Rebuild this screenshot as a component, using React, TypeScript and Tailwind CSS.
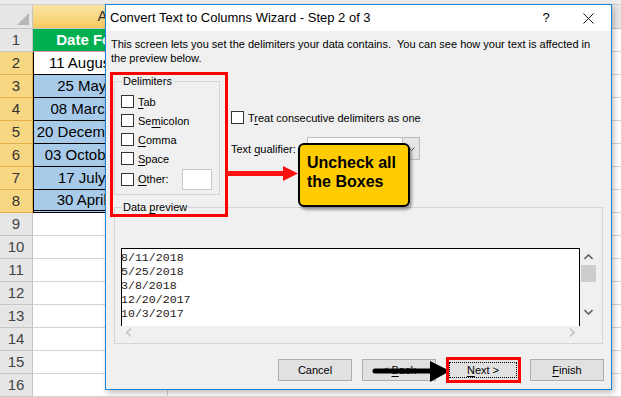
import React from 'react';

const rows = [
  { n: 1, text: 'Date Format', kind: 'head' },
  { n: 2, text: '11 August 2018', kind: 'white' },
  { n: 3, text: '25 May 2018', kind: 'blue' },
  { n: 4, text: '08 March 2018', kind: 'blue' },
  { n: 5, text: '20 December 2017', kind: 'blue' },
  { n: 6, text: '03 October 2017', kind: 'blue' },
  { n: 7, text: '17 July 2017', kind: 'blue' },
  { n: 8, text: '30 April 2017', kind: 'last' },
  { n: 9, text: '', kind: 'empty' },
  { n: 10, text: '', kind: 'empty' },
  { n: 11, text: '', kind: 'empty' },
  { n: 12, text: '', kind: 'empty' },
  { n: 13, text: '', kind: 'empty' },
  { n: 14, text: '', kind: 'empty' },
  { n: 15, text: '', kind: 'empty' },
  { n: 16, text: '', kind: 'empty' },
];

const preview = ['8/11/2018', '5/25/2018', '3/8/2018', '12/20/2017', '10/3/2017'];

const Box = () => <span className="w-[13px] h-[13px] border border-[#333] bg-white shrink-0" />;

const Check = ({ pre, u, post }: { pre?: string; u: string; post: string }) => (
  <div className="flex items-center h-[19px]">
    <Box />
    <span className="ml-[4px]">
      {pre}
      <span className="underline underline-offset-2">{u}</span>
      {post}
    </span>
  </div>
);

const Button = ({ children, focus }: { children: React.ReactNode; focus?: boolean }) => (
  <div className="w-[74px] h-[22px] border border-[#adadad] bg-[#e1e1e1] flex items-center justify-center p-[2px]">
    <div className={`w-full h-full flex items-center justify-center ${focus ? 'border border-dotted border-black' : ''}`}>
      {children}
    </div>
  </div>
);

const Sheet = () => (
  <div className="flex flex-col">
    <div className="h-[5px] bg-[#ececec] border-b border-[#d0d0d0]" />
    <div className="flex h-[24px] border-b border-[#c6c6c6]">
      <div className="w-[33px] bg-[#e6e6e6] border-r border-[#c6c6c6] relative">
        <div className="absolute right-[3px] bottom-[3px] w-0 h-0 border-l-[12px] border-l-transparent border-b-[12px] border-b-[#b7b7b7]" />
      </div>
      <div className="w-[134px] bg-gradient-to-b from-[#fbe5a3] to-[#f6ca5f] border-r border-[#e0a830] flex items-center justify-center pl-[6px] text-[15px] text-[#333]">
        A
      </div>
      <div className="flex-1 bg-[#e6e6e6]" />
    </div>
    {rows.map((r) => {
      const sel = r.n >= 2 && r.n <= 8;
      let cell = 'bg-white border-b border-[#d4d4d4]';
      if (r.kind === 'head') cell = 'bg-[#00b050] text-white font-bold border-b border-[#e090a0]';
      if (r.kind === 'white') cell = 'bg-white border-b border-black border-l border-l-black';
      if (r.kind === 'blue') cell = 'bg-[#a9cbea] border-b border-black border-l border-l-black';
      if (r.kind === 'last') cell = 'bg-[#a9cbea] border-b-[3px] border-double border-black border-l border-l-black';
      return (
        <div key={r.n} className="flex h-[23px]">
          <div
            className={`w-[33px] shrink-0 flex items-center justify-center text-[15px] border-r border-b ${
              sel ? 'bg-[#f8d783] border-[#e2b04a] text-[#333]' : 'bg-[#e6e6e6] border-[#c6c6c6] text-[#444]'
            }`}
          >
            {r.n}
          </div>
          <div className={`w-[134px] shrink-0 flex items-center justify-center text-[15px] whitespace-nowrap overflow-hidden ${cell}`}>
            {r.text}
          </div>
          <div className="flex-1 border-b border-l border-[#d4d4d4]" />
        </div>
      );
    })}
  </div>
);

const Dialog = () => (
  <div className="absolute left-[105px] top-[4px] w-[507px] h-[386px] border border-[#1a83d6] bg-[#f0f0f0] flex flex-col shadow-[2px_3px_6px_rgba(0,0,0,0.25)] text-[11px] leading-[14px] text-black">
    <div className="h-[26px] bg-white flex items-center pl-[4px] text-[13px]">
      <span className="flex-1">Convert Text to Columns Wizard - Step 2 of 3</span>
      <span className="w-[20px] text-center mr-[27px] text-[13px]">?</span>
      <svg width="11" height="11" viewBox="0 0 11 11" className="mr-[17px]">
        <path d="M0.5 0.5 L10.5 10.5 M10.5 0.5 L0.5 10.5" stroke="#111" strokeWidth="1" />
      </svg>
    </div>
    <div className="flex-1 px-[5px] pt-[6px] pb-[8px] flex flex-col">
      <p>
        This screen lets you set the delimiters your data contains.&nbsp; You can see how your text is affected in
        <br />
        the preview below.
      </p>
      <div className="flex mt-[9px]">
        <fieldset className="ml-[3px] w-[106px] h-[121px] border border-[#d5d5d5] px-[6px] pb-[4px]">
          <legend className="ml-[1px] px-[1px]">Delimiters</legend>
          <div className="pt-[4px] flex flex-col">
            <Check u="T" post="ab" />
            <Check pre="Se" u="m" post="icolon" />
            <Check u="C" post="omma" />
            <Check u="S" post="pace" />
            <div className="flex items-center h-[22px]">
              <Box />
              <span className="ml-[4px]">
                <span className="underline underline-offset-2">O</span>ther:
              </span>
              <span className="ml-[13px] w-[30px] h-[21px] bg-white border border-[#c8c8c8]" />
            </div>
          </div>
        </fieldset>
        <div className="ml-[11px] flex flex-col">
          <div className="mt-[34px]">
            <Check pre="T" u="r" post="eat consecutive delimiters as one" />
          </div>
          <div className="mt-[10px] flex items-center">
            <span className="w-[76px]">
              Text <span className="underline underline-offset-2">q</span>ualifier:
            </span>
            <div className="w-[113px] h-[23px] bg-white border border-[#bcbcbc] flex justify-end">
              <div className="w-[17px] h-full bg-[#e5e5e5] border-l border-[#bcbcbc] flex items-center justify-center">
                <svg width="7" height="4" viewBox="0 0 7 4">
                  <path d="M0.5 0.5 L3.5 3.5 L6.5 0.5" stroke="#555" fill="none" />
                </svg>
              </div>
            </div>
          </div>
        </div>
      </div>
      <fieldset className="mt-[5px] ml-[3px] w-[489px] h-[144px] border border-[#d5d5d5] px-[6px]">
        <legend className="ml-[1px] px-[1px]">
          Data <span className="underline underline-offset-2">p</span>review
        </legend>
        <div className="mt-[34px] flex w-[475px]">
          <div className="flex flex-col w-[459px]">
            <div className="h-[78px] bg-white border-t border-l border-r border-black font-['Liberation_Mono',monospace] text-[11.6px] leading-[14px] text-[#2a1a1a] pt-[2px] overflow-hidden">
              {preview.map((p) => (
                <div key={p} className="-ml-[1px]">{p}</div>
              ))}
            </div>
            <div className="h-[12px] flex items-center justify-between px-[5px]">
              <svg width="6" height="9" viewBox="0 0 6 9"><path d="M5 0.5 L1 4.5 L5 8.5" stroke="#c4c4c4" strokeWidth="1.6" fill="none" /></svg>
              <svg width="6" height="9" viewBox="0 0 6 9"><path d="M1 0.5 L5 4.5 L1 8.5" stroke="#c4c4c4" strokeWidth="1.6" fill="none" /></svg>
            </div>
          </div>
          <div className="w-[16px] h-[78px] flex flex-col items-center">
            <svg width="9" height="6" viewBox="0 0 9 6" className="mt-[6px]"><path d="M0.5 5 L4.5 1 L8.5 5" stroke="#606060" strokeWidth="1.6" fill="none" /></svg>
            <div className="mt-[5px] w-[15px] h-[17px] bg-[#cdcdcd]" />
            <svg width="9" height="6" viewBox="0 0 9 6" className="mt-[27px]"><path d="M0.5 1 L4.5 5 L8.5 1" stroke="#606060" strokeWidth="1.6" fill="none" /></svg>
          </div>
        </div>
      </fieldset>
      <div className="mt-[15px] flex justify-end gap-[10px] pr-[2px]">
        <Button>Cancel</Button>
        <Button>
          &lt; <span className="underline underline-offset-2 ml-[3px]">B</span>ack
        </Button>
        <Button focus>
          <span className="underline underline-offset-2">N</span>ext &gt;
        </Button>
        <Button>
          <span className="underline underline-offset-2">F</span>inish
        </Button>
      </div>
    </div>
  </div>
);

const App = () => {
  return (
    <div className="relative w-[621px] h-[397px] overflow-hidden bg-white font-['Liberation_Sans',Arial,sans-serif]">
      <Sheet />
      <Dialog />

      {/* annotations */}
      <div className="absolute left-[110px] top-[72px] w-[118px] h-[145px] border-[3px] border-[#ff0000]" />
      <svg className="absolute left-[226px] top-[164px]" width="74" height="20" viewBox="0 0 74 20">
        <rect x="0" y="7" width="60" height="5" fill="#ff1010" />
        <polygon points="57,2 72,9.5 57,17" fill="#ff1010" />
      </svg>
      <div className="absolute left-[298px] top-[143px] w-[112px] h-[64px] bg-[#ffcc00] border-2 border-black rounded-[6px] shadow-[2px_3px_3px_rgba(0,0,0,0.35)] px-[7px] pt-[8px] text-[16px] leading-[19px] font-bold text-black">
        Uncheck all
        <br />
        the Boxes
      </div>
      <svg className="absolute left-[370px] top-[359px]" width="82" height="26" viewBox="0 0 82 26">
        <path d="M5 9.5 L62 9.5 L62 14.5 L5 14.5 A2.5 2.5 0 0 1 5 9.5 Z" fill="#000" />
        <polygon points="60,2 80,12 60,23" fill="#000" />
      </svg>
      <div className="absolute left-[446px] top-[357px] w-[75px] h-[26px] border-[3px] border-[#ff0000]" />
    </div>
  );
};

export default App;
